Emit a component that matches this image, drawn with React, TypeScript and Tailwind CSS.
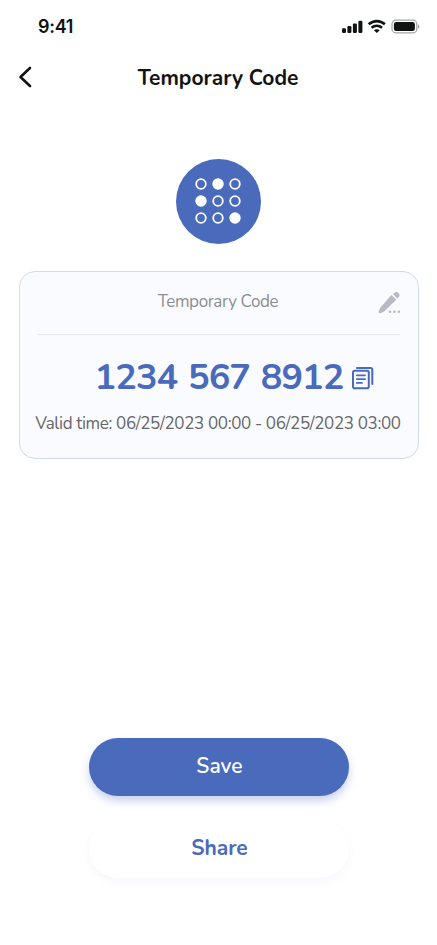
import type {ReactNode} from 'react';

const DOTS = [false, true, false, true, false, false, false, false, true];

export default function App() {
  return (
    <main className="flex h-[945px] w-[437px] flex-col overflow-hidden bg-white font-['Nunito','Open_Sans',sans-serif] text-[#111313]">
      <StatusBar />
      <Header title="Temporary Code" />

      <section className="mt-[59px] flex flex-col items-center">
        <KeypadBadge />
        <CodeCard />
      </section>

      <div className="mt-[279px] flex flex-col items-center gap-6">
        <ActionButton className="bg-[#4a6abb] font-semibold text-white shadow-[0_5px_9px_rgba(74,106,187,0.3)]">
          Save
        </ActionButton>
        <ActionButton className="bg-white font-bold text-[#4a6abb] shadow-[0_4px_8px_rgba(74,106,187,0.05)]">
          Share
        </ActionButton>
      </div>
    </main>
  );
}

function StatusBar() {
  return (
    <div className="flex h-[54px] shrink-0 items-center justify-between pr-[17px] pl-[38px]">
      <span className="font-['Inter',sans-serif] text-[18px] leading-none font-semibold tracking-[-0.3px]">9:41</span>
      <svg width="78" height="16" viewBox="0 0 78 16" fill="#111313" aria-hidden="true">
        <rect x="0" y="9.2" width="4" height="4.8" rx="1.2" />
        <rect x="5.4" y="7" width="4" height="7" rx="1.2" />
        <rect x="10.9" y="4.4" width="4" height="9.6" rx="1.2" />
        <rect x="16.4" y="1.8" width="4" height="12.2" rx="1.2" />
        <g fill="none" stroke="#111313" strokeWidth="2.6">
          <path d="M26.7 5.3C31.5 1 38.1 1 42.9 5.3" />
          <path d="M29.6 8.8c3-2.7 7.4-2.7 10.4 0" />
        </g>
        <path d="M31.9 11.2c1.7-1.4 4.1-1.4 5.8 0l-2.9 2.9z" />
        <rect x="50" y="1.2" width="24.8" height="12.6" rx="3.8" fill="none" stroke="#111313" strokeOpacity=".38" strokeWidth="1.2" />
        <rect x="51.9" y="3.1" width="21" height="8.9" rx="2.3" />
        <path d="M76 5.3c1.9.8 1.9 3.6 0 4.4z" fillOpacity=".4" />
      </svg>
    </div>
  );
}

function Header({title}: {title: string}) {
  return (
    <header className="grid h-[46px] shrink-0 grid-cols-[44px_1fr_44px] items-center">
      <button type="button" aria-label="Back" className="pl-[17px]">
        <svg width="15" height="22" viewBox="0 0 15 22" fill="none" aria-hidden="true">
          <path d="M13 2 3.5 11l9.5 9" stroke="#111313" strokeWidth="2.6" strokeLinecap="round" strokeLinejoin="round" />
        </svg>
      </button>
      <h1 className="pt-[2px] pr-px text-center text-[21px] leading-none font-bold whitespace-nowrap">{title}</h1>
    </header>
  );
}

function KeypadBadge() {
  return (
    <div className="flex size-[85px] items-center justify-center rounded-full bg-[#4a6abb] pr-px pb-px">
      <div className="grid grid-cols-3 gap-x-[5px] gap-y-[4.7px]">
        {DOTS.map((filled, index) => (
          <svg key={index} width="12" height="12" viewBox="0 0 12 12" aria-hidden="true">
            <circle cx="6" cy="6" r="4.8" fill={filled ? '#fff' : 'none'} stroke="#fff" strokeWidth="1.8" />
          </svg>
        ))}
      </div>
    </div>
  );
}

function CodeCard() {
  return (
    <div className="mt-[27px] h-[188px] w-[400px] rounded-[16px] border border-[#d0daf0] bg-[#fafbff]">
      <div className="mx-[18px] grid h-[63px] grid-cols-[24px_1fr_24px] items-center border-b border-[#e5e7ef]">
        <h2 className="col-start-2 pr-px pb-[4px] text-center text-[17px] leading-none tracking-[-0.38px] whitespace-nowrap text-[#8d8e91]">
          Temporary Code
        </h2>
        <button type="button" aria-label="Edit" className="pb-px pl-px">
          <PencilIcon />
        </button>
      </div>
      <div className="mt-[18px] flex items-center pl-[75px]">
        <p className="w-[251px] pt-px text-[36px] leading-[48px] font-bold tracking-[-0.9px] whitespace-nowrap text-[#4a6abb] [word-spacing:1.8px]">
          1234 567 8912
        </p>
        <button type="button" aria-label="Copy" className="ml-[6.5px]">
          <CopyIcon />
        </button>
      </div>
      <p className="mt-[10px] pr-px text-center text-[17px] leading-6 tracking-[-0.34px] whitespace-nowrap text-[#656668]">
        Valid time: 06/25/2023 00:00 - 06/25/2023 03:00
      </p>
    </div>
  );
}

function PencilIcon() {
  return (
    <svg width="24" height="24" viewBox="0 0 24 24" fill="#b7b9c5" aria-hidden="true">
      <path d="m14.4 4 4.8 4.8L7.9 19.8c-1.7 1.5-3.7 2.3-5.6 2.4-.5 0-.7-.3-.7-.8.2-2 1-4 2.5-5.6z" />
      <path d="M16 2.9 17.4 1.7c1.3-1.1 2.9-1 4.1.3 1.3 1.3 1.4 2.8.3 4.1l-1.3 1.5z" />
      <circle cx="13" cy="20.8" r="1.3" />
      <circle cx="17.4" cy="20.8" r="1.3" />
      <circle cx="21.8" cy="20.8" r="1.3" />
    </svg>
  );
}

function CopyIcon() {
  return (
    <svg width="23" height="24" viewBox="0 0 23 24" fill="none" stroke="#4a6abb" strokeWidth="2" aria-hidden="true">
      <rect x="1" y="4.8" width="15.8" height="17.4" rx="1.8" />
      <path d="M5 1.9h13.6c1 0 1.7.7 1.7 1.7v14.4" strokeLinecap="round" />
      <path d="M4.8 9.3h8.2M4.8 13.1h8.2M4.8 16.9h5.2" strokeWidth="1.8" strokeLinecap="round" />
    </svg>
  );
}

function ActionButton({className, children}: {className: string; children: ReactNode}) {
  return (
    <button
      type="button"
      className={`flex h-[58px] w-[260px] items-center justify-center rounded-full pb-px pl-[2px] text-[21px] leading-none ${className}`}
    >
      {children}
    </button>
  );
}
